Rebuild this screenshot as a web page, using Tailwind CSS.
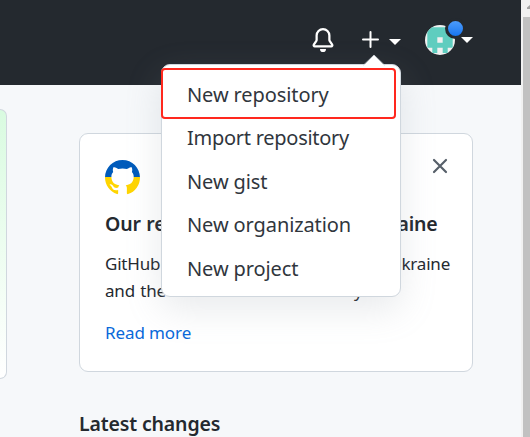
<!DOCTYPE html>
<html lang="en">
<head>
<meta charset="utf-8">
<title>GitHub</title>
<script src="https://cdn.jsdelivr.net/npm/@tailwindcss/browser@4"></script>
</head>
<body class="relative flex h-[437px] w-[530px] overflow-hidden bg-[#f6f8fa] font-['Noto_Sans','Open_Sans',sans-serif] text-[#24292f]">
<div class="flex w-[521px] flex-col">
  <header class="flex h-[85px] w-full shrink-0 items-start bg-[#24292f] pt-[24px] pl-[311px]">
    <svg class="mt-[4px] h-6 w-6" viewBox="0 0 16 16" fill="#fff"><path d="M8 16a2 2 0 001.985-1.75c.017-.137-.097-.25-.235-.25h-3.5c-.138 0-.252.113-.235.25A2 2 0 008 16z"/><path fill-rule="evenodd" d="M8 1.5A3.5 3.5 0 004.5 5v2.947c0 .346-.102.683-.294.97l-1.703 2.556a.018.018 0 00-.003.01l.001.006c0 .002.002.004.004.006a.017.017 0 00.006.004l.007.001h10.964l.007-.001a.016.016 0 00.006-.004.016.016 0 00.004-.006l.001-.007a.017.017 0 00-.003-.01l-1.703-2.554a1.75 1.75 0 01-.294-.97V5A3.5 3.5 0 008 1.5zM3 5a5 5 0 0110 0v2.947c0 .05.015.098.042.139l1.703 2.555A1.518 1.518 0 0113.482 13H2.518a1.518 1.518 0 01-1.263-2.36l1.703-2.554A.25.25 0 003 7.947V5z"/></svg>
    <svg class="mt-[7px] ml-[27px] h-[18px] w-[18px]" viewBox="0 0 18 18" stroke="#fff" stroke-width="2" stroke-linecap="round"><path d="M8.5 1v15M1 8.5h15"/></svg>
    <svg class="mt-[15px] ml-[9px] h-[6px] w-[12px]" viewBox="0 0 12 6" fill="#fff"><path d="M0 0h12L6 6z"/></svg>
    <div class="relative mt-[1px] ml-[24px] h-[30px] w-[30px]">
      <svg class="h-[30px] w-[30px]" viewBox="0 0 30 30"><defs><clipPath id="av"><circle cx="15" cy="15" r="15"/></clipPath></defs><g clip-path="url(#av)"><path fill="#f0f0f0" d="M0 0h30v30H0z"/><path fill="#5fcdbf" d="M2.300 2.300h25.400v20.500h-5v5.200h-5v-5.200h-5.400v5.200h-5v-5.200h-5z"/><path fill="#f0f0f0" d="M12.300 12.300h5.400v5.400h-5.400z"/></g></svg>
      <span class="absolute -top-[7px] left-[20px] h-[21px] w-[21px] rounded-full border-[3px] border-[#24292f] bg-linear-to-b from-[#54a3ff] to-[#006eed] bg-origin-border"></span>
    </div>
    <svg class="relative mt-[13px] ml-[6px] h-[6px] w-[12px]" viewBox="0 0 12 6" fill="#fff"><path d="M0 0h12L6 6z"/></svg>
  </header>
  <main class="flex items-start">
    <section class="mt-[24px] h-[270px] w-[7px] shrink-0 rounded-r-[9px] border border-l-0 border-[#d0d7de] bg-linear-to-b from-[#d9fbe0] to-white"></section>
    <aside class="ml-[72px] w-[394px] shrink-0 pt-[48px]">
      <article class="h-[239px] rounded-[9px] border border-[#d0d7de] bg-white pt-[26px] pr-[22px] pl-[25px] whitespace-nowrap">
        <div class="flex items-start justify-between">
          <svg class="h-[35px] w-[35px]" viewBox="0 0 16 16"><defs><linearGradient id="ua" x2="0" y2="1"><stop offset=".5" stop-color="#005bbb"/><stop offset=".5" stop-color="#ffd500"/></linearGradient></defs><path fill="url(#ua)" fill-rule="evenodd" d="M8 0C3.580 0 0 3.580 0 8c0 3.540 2.290 6.530 5.470 7.590.4.070.55-.17.55-.38 0-.19-.01-.82-.01-1.490-2.010.37-2.530-.49-2.690-.94-.09-.23-.48-.94-.82-1.130-.28-.15-.68-.52-.01-.53.63-.01 1.080.58 1.230.82.72 1.210 1.870.87 2.330.66.07-.52.28-.87.51-1.070-1.780-.2-3.640-.89-3.640-3.950 0-.87.31-1.590.82-2.150-.08-.2-.36-1.020.08-2.120 0 0 .67-.21 2.200.82.64-.18 1.320-.27 2-.27.68 0 1.360.09 2 .27 1.530-1.040 2.200-.82 2.200-.82.44 1.100.16 1.920.08 2.120.51.56.82 1.270.82 2.150 0 3.070-1.870 3.750-3.650 3.950.29.25.54.73.54 1.480 0 1.070-.01 1.930-.01 2.200 0 .21.15.46.55.38A8.013 8.013 0 0016 8c0-4.420-3.580-8-8-8z"/></svg>
          <svg class="mt-[-1px] mr-[3px] h-[14px] w-[14px] overflow-visible" viewBox="0 0 14 14" stroke="#57606a" stroke-width="2.200" stroke-linecap="round"><path d="M1 1l12 12M13 1L1 13"/></svg>
        </div>
        <h2 class="mt-[15px] text-[19.500px] leading-[28px] font-semibold tracking-[-0.150px] [word-spacing:0.6px]">Our response to the war in Ukraine</h2>
        <p class="mt-[12px] text-[17px] leading-[27px] tracking-[-0.200px] [word-spacing:1.200px]">GitHub is united with the people of Ukraine<br>and the <span class="tracking-[-0.300px] [word-spacing:0px]">international community.</span></p>
        <a class="mt-[15px] block text-[17px] leading-[27px] tracking-[-0.100px] text-[#0969da]">Read more</a>
      </article>
      <h2 class="mt-[38px] text-[19.500px] leading-[28px] font-semibold tracking-[-0.150px]">Latest changes</h2>
    </aside>
  </main>
</div>
<div class="relative w-[9px] bg-[#f1f1f1] pt-[17px] pl-[2px]">
  <svg class="absolute top-[5px] right-0 h-[4px] w-[3px]" viewBox="0 0 3 4" fill="#a3a3a3"><path d="M0 4V2.500L3 0v4z"/></svg>
  <div class="h-[420px] bg-[#c1c1c1]"></div>
</div>
<nav class="absolute top-[64px] left-[161px] h-[233px] w-[240px] rounded-[9px] border border-[#d0d7de] bg-white pt-[8px] text-[20px] leading-[43.400px] tracking-[-0.100px] whitespace-nowrap text-[#30363d] shadow-[0_12px_36px_rgba(140,149,159,0.2)]">
  <svg class="absolute -top-[11px] left-[201px] h-[12px] w-[22px]" viewBox="0 0 22 12"><path d="M0 12L11 1l11 11z" fill="#fff"/><path d="M0 11.500L11 1l11 10.500" fill="none" stroke="#d0d7de" stroke-width=".7"/></svg>
  <div class="absolute top-[3px] -left-px h-[51px] w-[235px] rounded-[4px] border-2 border-[#ff281e]"></div>
  <ul class="pl-[25px]"><li>New repository</li><li class="tracking-[-0.270px]">Import repository</li><li>New gist</li><li>New organization</li><li>New project</li></ul>
</nav>
</body>
</html>
